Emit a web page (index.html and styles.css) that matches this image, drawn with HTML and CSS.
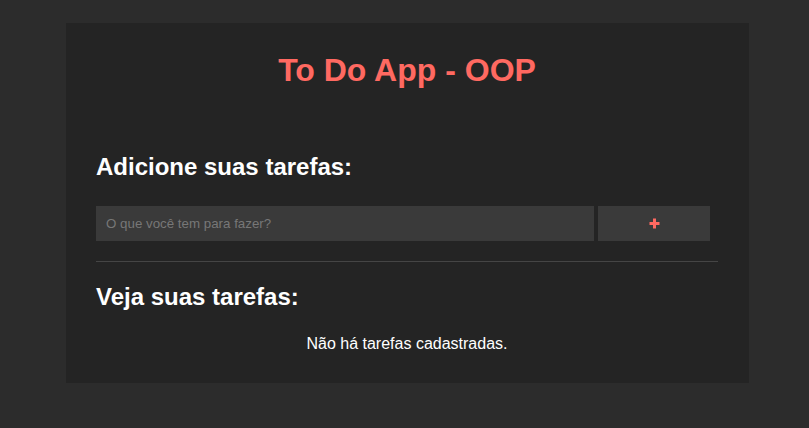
FILE: index.html
```html
<!DOCTYPE html>
<html lang="pt-BR">
<head>
<meta charset="utf-8">
<title>To Do App - OOP</title>
<link rel="stylesheet" href="styles.css">
</head>
<body>
<main class="app">
  <h1 class="title">To Do App - OOP</h1>
  <section class="add">
    <h2 class="subtitle">Adicione suas tarefas:</h2>
    <form class="form">
      <input class="task-input" type="text" placeholder="O que você tem para fazer?">
      <button class="add-btn" type="button" aria-label="Adicionar">
        <svg width="11" height="11" viewBox="0 0 11 11"><path d="M5.5 0.5v10M0.5 5.5h10" stroke="#ff6961" stroke-width="3"/></svg>
      </button>
    </form>
  </section>
  <hr class="divider">
  <section class="list">
    <h2 class="subtitle list-title">Veja suas tarefas:</h2>
    <p class="empty">Não há tarefas cadastradas.</p>
  </section>
</main>
</body>
</html>
```
FILE: styles.css
```css
html, body {
  margin: 0;
  padding: 0;
}
body {
  background: #2c2c2c;
  font-family: "Liberation Sans", Arial, sans-serif;
  color: #fff;
  padding-top: 23px;
  min-height: 405px;
}
.app {
  width: 683px;
  box-sizing: border-box;
  margin-left: 66px;
  background: #242424;
  padding: 29px 31px 30px 30px;
}
.title {
  margin: 0;
  font-size: 32px;
  font-weight: bold;
  color: #ff6961;
  text-align: center;
}
.subtitle {
  margin: 0;
  font-size: 24px;
  font-weight: bold;
  color: #fff;
}
.add {
  margin-top: 64px;
}
.form {
  display: flex;
  gap: 4px;
  margin-top: 25px;
}
.task-input {
  width: 498px;
  height: 35px;
  box-sizing: border-box;
  border: none;
  outline: none;
  background: #3a3a3a;
  color: #ddd;
  padding: 0 10px;
  font-family: "Liberation Sans", Arial, sans-serif;
  font-size: 13.33px;
}
.task-input::placeholder {
  color: #777;
}
.add-btn {
  width: 112px;
  height: 35px;
  border: none;
  background: #3a3a3a;
  display: flex;
  align-items: center;
  justify-content: center;
  padding: 0;
  cursor: pointer;
}
.divider {
  margin: 20px 0 0 0;
  border: none;
  height: 1px;
  background: #454545;
}
.list-title {
  margin-top: 21px;
}
.empty {
  margin: 24px 0 0 0;
  font-size: 16px;
  text-align: center;
  color: #fff;
}
```
